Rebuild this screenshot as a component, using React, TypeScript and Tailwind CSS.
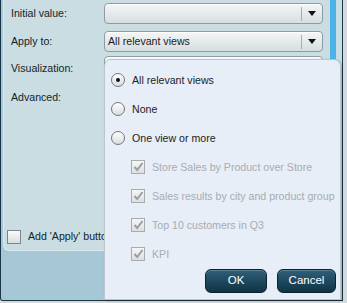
import React from "react";

function Select({ text, tall }: { text?: string; tall?: boolean }) {
  return (
    <div
      className={`w-[219px] ${tall ? "h-[26px] items-start pt-[3px]" : "h-[21px] items-center"} flex rounded-[4px] border border-[#8d9ca2] bg-gradient-to-b from-[#f4f6f7] to-[#d6dee0] shadow-[inset_0_1px_0_#ffffff]`}
    >
      <div className="flex-1 pl-[3px] text-[10.6px] text-[#1b1b1b] leading-none">{text}</div>
      <div className="w-px h-[14px] bg-[#a3afb3]" />
      <div className="w-[20px] flex items-center justify-center">
        <svg width="8" height="5" viewBox="0 0 8 5">
          <path d="M0 0 H8 L4 5 Z" fill="#111" />
        </svg>
      </div>
    </div>
  );
}

function Radio({ checked, label }: { checked?: boolean; label: string }) {
  return (
    <div className="flex items-center h-[14px] gap-[7px]">
      <div className="w-[14px] h-[14px] rounded-full border border-[#6f777c] bg-gradient-to-b from-[#ffffff] to-[#d9dde0] flex items-center justify-center shrink-0">
        {checked && <div className="w-[4px] h-[4px] rounded-full bg-[#111]" />}
      </div>
      <span className="text-[10.6px] text-[#1c1c1c] leading-none">{label}</span>
    </div>
  );
}

function DisabledCheck({ label }: { label: string }) {
  return (
    <div className="flex items-center h-[14px] gap-[7px] ml-[20px]">
      <div className="w-[14px] h-[14px] border border-[#a9acae] bg-gradient-to-b from-[#f6f6f6] to-[#dcdfe1] flex items-center justify-center shrink-0">
        <svg width="11" height="10" viewBox="0 0 11 10">
          <path d="M1.5 5 L4.2 8 L9.5 1" stroke="#9a9ea1" strokeWidth="2" fill="none" />
        </svg>
      </div>
      <span className="text-[10.6px] text-[#a6acb2] leading-none whitespace-nowrap">{label}</span>
    </div>
  );
}

export default function App() {
  return (
    <div className="w-[347px] h-[303px] bg-[#d5d9dc] relative overflow-hidden font-['Liberation_Sans',Arial,sans-serif]">
      <div className="w-[343px] h-[301px] bg-[#a6c7d5] border-l border-b border-r border-[#1a3546] rounded-bl-[3px] flex">
        <div className="flex-1 flex flex-col">
          <div className="ml-[2px] h-[251px] bg-[#c9dde3] border-l border-b border-[#dbe8ec] rounded-bl-[6px] flex flex-col pt-[3px]">
            <div className="flex h-[21px] items-center pl-[7px]">
              <div className="w-[93px] text-[10.6px] text-[#15222b] shrink-0">Initial value:</div>
              <Select />
            </div>
            <div className="flex h-[21px] items-center pl-[7px] mt-[7px]">
              <div className="w-[93px] text-[10.6px] text-[#15222b] shrink-0">Apply to:</div>
              <Select text="All relevant views" />
            </div>
            <div className="flex h-[26px] items-center pl-[7px] mt-[4px]">
              <div className="w-[93px] text-[10.6px] text-[#15222b] shrink-0">Visualization:</div>
              <Select tall />
            </div>
            <div className="flex h-[21px] items-center pl-[7px] mt-[5px]">
              <div className="w-[93px] text-[10.6px] text-[#15222b] shrink-0">Advanced:</div>
            </div>
            <div className="flex-1" />
            <div className="flex items-center h-[14px] gap-[7px] pl-[3px] mb-[6px]">
              <div className="w-[14px] h-[14px] border border-[#7c878c] bg-gradient-to-b from-[#fafbfb] to-[#d7dde0] shrink-0" />
              <span className="text-[10.6px] text-[#15222b] whitespace-nowrap">Add 'Apply' button to visualization</span>
            </div>
          </div>
        </div>
        <div className="w-[12px] flex">
          <div className="w-[6px] bg-[#4bb3e8]" />
          <div className="w-[6px] bg-[#c8dde4]" />
        </div>
      </div>

      <div className="absolute left-[104px] top-[59px] w-[237px] h-[241px] bg-[#e8eef8] border border-[#bcc4cc] rounded-t-[7px] shadow-[1px_1px_2px_rgba(0,0,0,0.25)] flex flex-col pt-[13px] pl-[6px]">
        <div className="flex flex-col gap-[15px]">
          <Radio checked label="All relevant views" />
          <Radio label="None" />
          <Radio label="One view or more" />
          <DisabledCheck label="Store Sales by Product over Store" />
          <DisabledCheck label="Sales results by city and product group" />
          <DisabledCheck label="Top 10 customers in Q3" />
          <DisabledCheck label="KPI" />
        </div>
        <div className="mt-auto flex justify-end gap-[10px] pr-[4px] pb-[6px]">
          <button className="w-[62px] h-[24px] rounded-[6px] border border-[#0b2331] bg-gradient-to-b from-[#30607a] to-[#0f3344] text-white text-[11.5px] shadow-[inset_0_1px_0_rgba(255,255,255,0.2)]">
            OK
          </button>
          <button className="w-[59px] h-[24px] rounded-[6px] border border-[#0b2331] bg-gradient-to-b from-[#30607a] to-[#0f3344] text-white text-[11.5px] shadow-[inset_0_1px_0_rgba(255,255,255,0.2)]">
            Cancel
          </button>
        </div>
      </div>
    </div>
  );
}
